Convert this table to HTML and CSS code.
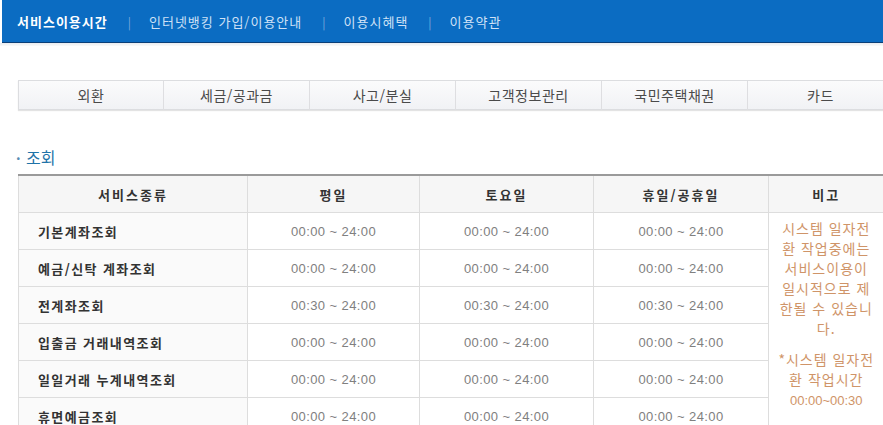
FILE: index.html
```html
<!DOCTYPE html>
<html lang="ko">
<head>
  <meta charset="UTF-8">
  <title>서비스이용시간</title>
  <link rel="stylesheet" href="styles.css">
</head>
<body>

  <div class="topbar">
    <a class="on" href="#">서비스이용시간</a>
    <span class="sep">|</span>
    <a href="#">인터넷뱅킹 가입/이용안내</a>
    <span class="sep">|</span>
    <a href="#">이용시혜택</a>
    <span class="sep">|</span>
    <a href="#">이용약관</a>
  </div>
  <div class="shade"></div>

  <ul class="tabs">
    <li>외환</li>
    <li>세금/공과금</li>
    <li>사고/분실</li>
    <li>고객정보관리</li>
    <li>국민주택채권</li>
    <li>카드</li>
  </ul>

  <h3 class="title"><span class="dot">·</span> 조회</h3>

  <table class="hours">
    <colgroup>
      <col class="c1"><col class="c2"><col class="c3"><col class="c4"><col class="c5">
    </colgroup>
    <tr>
      <th>서비스종류</th>
      <th>평일</th>
      <th>토요일</th>
      <th>휴일/공휴일</th>
      <th>비고</th>
    </tr>
    <tr>
      <td class="name">기본계좌조회</td>
      <td>00:00 ~ 24:00</td>
      <td>00:00 ~ 24:00</td>
      <td>00:00 ~ 24:00</td>
      <td class="note" rowspan="6">
        <p>시스템 일자전<br>환 작업중에는<br>서비스이용이<br>일시적으로 제<br>한될 수 있습니<br>다.</p>
        <p>*시스템 일자전<br>환 작업시간<br><span class="num">00:00~00:30</span></p>
      </td>
    </tr>
    <tr>
      <td class="name">예금/신탁 계좌조회</td>
      <td>00:00 ~ 24:00</td>
      <td>00:00 ~ 24:00</td>
      <td>00:00 ~ 24:00</td>
    </tr>
    <tr>
      <td class="name">전계좌조회</td>
      <td>00:30 ~ 24:00</td>
      <td>00:30 ~ 24:00</td>
      <td>00:30 ~ 24:00</td>
    </tr>
    <tr>
      <td class="name">입출금 거래내역조회</td>
      <td>00:00 ~ 24:00</td>
      <td>00:00 ~ 24:00</td>
      <td>00:00 ~ 24:00</td>
    </tr>
    <tr>
      <td class="name">일일거래 누계내역조회</td>
      <td>00:00 ~ 24:00</td>
      <td>00:00 ~ 24:00</td>
      <td>00:00 ~ 24:00</td>
    </tr>
    <tr>
      <td class="name">휴면예금조회</td>
      <td>00:00 ~ 24:00</td>
      <td>00:00 ~ 24:00</td>
      <td>00:00 ~ 24:00</td>
    </tr>
  </table>

</body>
</html>
```

FILE: styles.css
```css
html, body {
  overflow: hidden;
}
body {
  margin: 0;
  width: 883px;
  background: #fff;
  font-family: "Noto Sans CJK KR", "Liberation Sans", sans-serif;
  color: #333;
}
.topbar {
  height: 43px;
  margin-left: 2px;
  padding-left: 15px;
  background: #0b6cc2;
  border-bottom: 1px solid #0a3f78;
  display: flex;
  align-items: center;
  font-size: 13px;
  letter-spacing: 1px;
  padding-top: 1px;
  box-sizing: border-box;
}
.topbar a {
  color: #cfe1f6;
  text-decoration: none;
}
.topbar a.on {
  color: #fff;
  font-weight: bold;
}
.topbar .sep {
  color: #7aa9dd;
  margin: 0 17px 0 20px;
  font-size: 12px;
}
.shade {
  height: 3px;
  background: linear-gradient(#e9ecef, #fafafa);
}
.tabs {
  list-style: none;
  margin: 34px 0 0 18px;
  padding: 0;
  display: flex;
  width: 900px;
}
.tabs li {
  flex: 0 0 145px;
  height: 28px;
  line-height: 28px;
  text-align: center;
  font-size: 14px;
  color: #4a4a4a;
  letter-spacing: 0.5px;
  background: linear-gradient(#fbfbfc, #f1f2f5);
  border: 1px solid #dcdde0;
  border-left: none;
  box-shadow: 0 1px 1px #e3e3e3;
}
.tabs li:first-child {
  border-left: 1px solid #dcdde0;
  flex-basis: 144px;
}
.title {
  margin: 37px 0 7px 16px;
  height: 20px;
  line-height: 20px;
  font-size: 16px;
  font-weight: normal;
  color: #1f73a8;
}
.title .dot {
  color: #5a8db3;
  font-size: 14px;
  font-weight: bold;
  margin-right: 1px;
}
.hours {
  margin-left: 18px;
  width: 865px;
  table-layout: fixed;
  border-collapse: collapse;
  border-top: 2px solid #9a9a9a;
}
.c1 { width: 229px; }
.c2 { width: 172px; }
.c3 { width: 174px; }
.c4 { width: 175px; }
.c5 { width: 115px; }
.hours th,
.hours td {
  height: 36px;
  padding: 0;
  border: 1px solid #dddddd;
  text-align: center;
  vertical-align: middle;
}
.hours tr > :last-child {
  border-right: none;
}
.hours th {
  background: #f6f6f6;
  font-size: 13px;
  font-weight: bold;
  letter-spacing: 2px;
  color: #333;
}
.hours td {
  font-family: "Liberation Sans", sans-serif;
  font-size: 13px;
  letter-spacing: 0.4px;
  color: #808080;
}
.hours td.name {
  font-family: "Noto Sans CJK KR", sans-serif;
  background: #fafafa;
  text-align: left;
  padding-left: 19px;
  font-size: 13px;
  font-weight: bold;
  letter-spacing: 1.4px;
  color: #333;
}
.hours td.note {
  font-family: "Noto Sans CJK KR", sans-serif;
  vertical-align: top;
  padding-top: 5px;
  font-size: 14px;
  line-height: 20px;
  letter-spacing: 1px;
  color: #cf9468;
  background: #fff;
}
.note p {
  margin: 0 0 11px;
}
.note .num {
  font-family: "Liberation Sans", sans-serif;
  font-size: 13px;
  letter-spacing: 0;
}
```
